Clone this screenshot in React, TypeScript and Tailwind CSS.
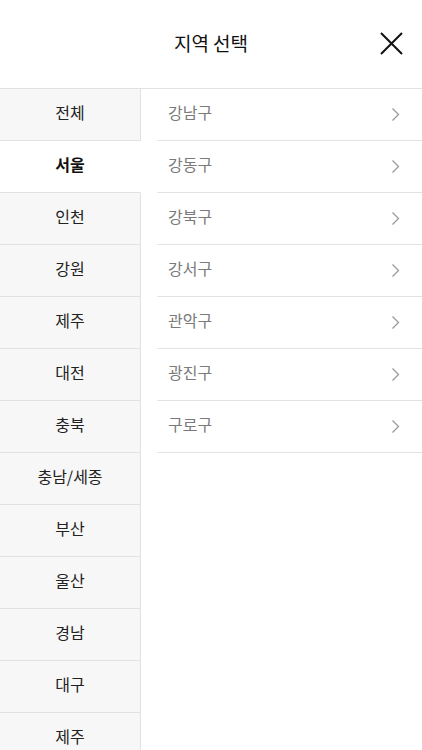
const regions = ["전체", "서울", "인천", "강원", "제주", "대전", "충북", "충남/세종", "부산", "울산", "경남", "대구", "제주"];
const districts = ["강남구", "강동구", "강북구", "강서구", "관악구", "광진구", "구로구"];

const App = () => {
  const selected = 1;

  return (
    <div
      className="h-[750px] w-[422px] overflow-hidden bg-white"
      style={{ fontFamily: '"Noto Sans CJK KR", "Noto Sans", sans-serif' }}
    >
      {/* Header */}
      <div className="relative flex h-[89px] items-center justify-center border-b border-[#e2e2e2] pb-[2px]">
        <h1 className="text-[19px] font-normal text-[#111]">지역 선택</h1>
        <button className="absolute right-[19px] top-[32px]">
          <svg width="23" height="23" viewBox="0 0 23 23" fill="none">
            <path d="M1 1 L22 22 M22 1 L1 22" stroke="#111" strokeWidth="2" />
          </svg>
        </button>
      </div>

      <div className="flex">
        {/* Region list */}
        <div className="w-[141px] shrink-0">
          {regions.map((r, i) => (
            <div
              key={i}
              className={
                i === selected
                  ? "flex h-[52px] items-center justify-center border-b border-r border-b-[#e2e2e2] border-r-white bg-white pb-[5px] text-[16px] font-bold text-[#111]"
                  : "flex h-[52px] items-center justify-center border-b border-r border-[#e2e2e2] bg-[#f7f7f7] pb-[5px] text-[16px] text-[#222]"
              }
            >
              {r}
            </div>
          ))}
        </div>

        {/* District list */}
        <div className="flex-1 pl-[16px]">
          {districts.map((d) => (
            <div
              key={d}
              className="flex h-[52px] items-center justify-between border-b border-[#e2e2e2] pl-[11px] pr-[22px]"
            >
              <span className="pb-[5px] text-[16px] text-[#7a7a7a]">{d}</span>
              <svg width="9" height="15" viewBox="0 0 9 15" fill="none">
                <path d="M1.5 1.5 L7.5 7.5 L1.5 13.5" stroke="#9a9a9a" strokeWidth="1.3" />
              </svg>
            </div>
          ))}
        </div>
      </div>
    </div>
  );
};

export default App;
